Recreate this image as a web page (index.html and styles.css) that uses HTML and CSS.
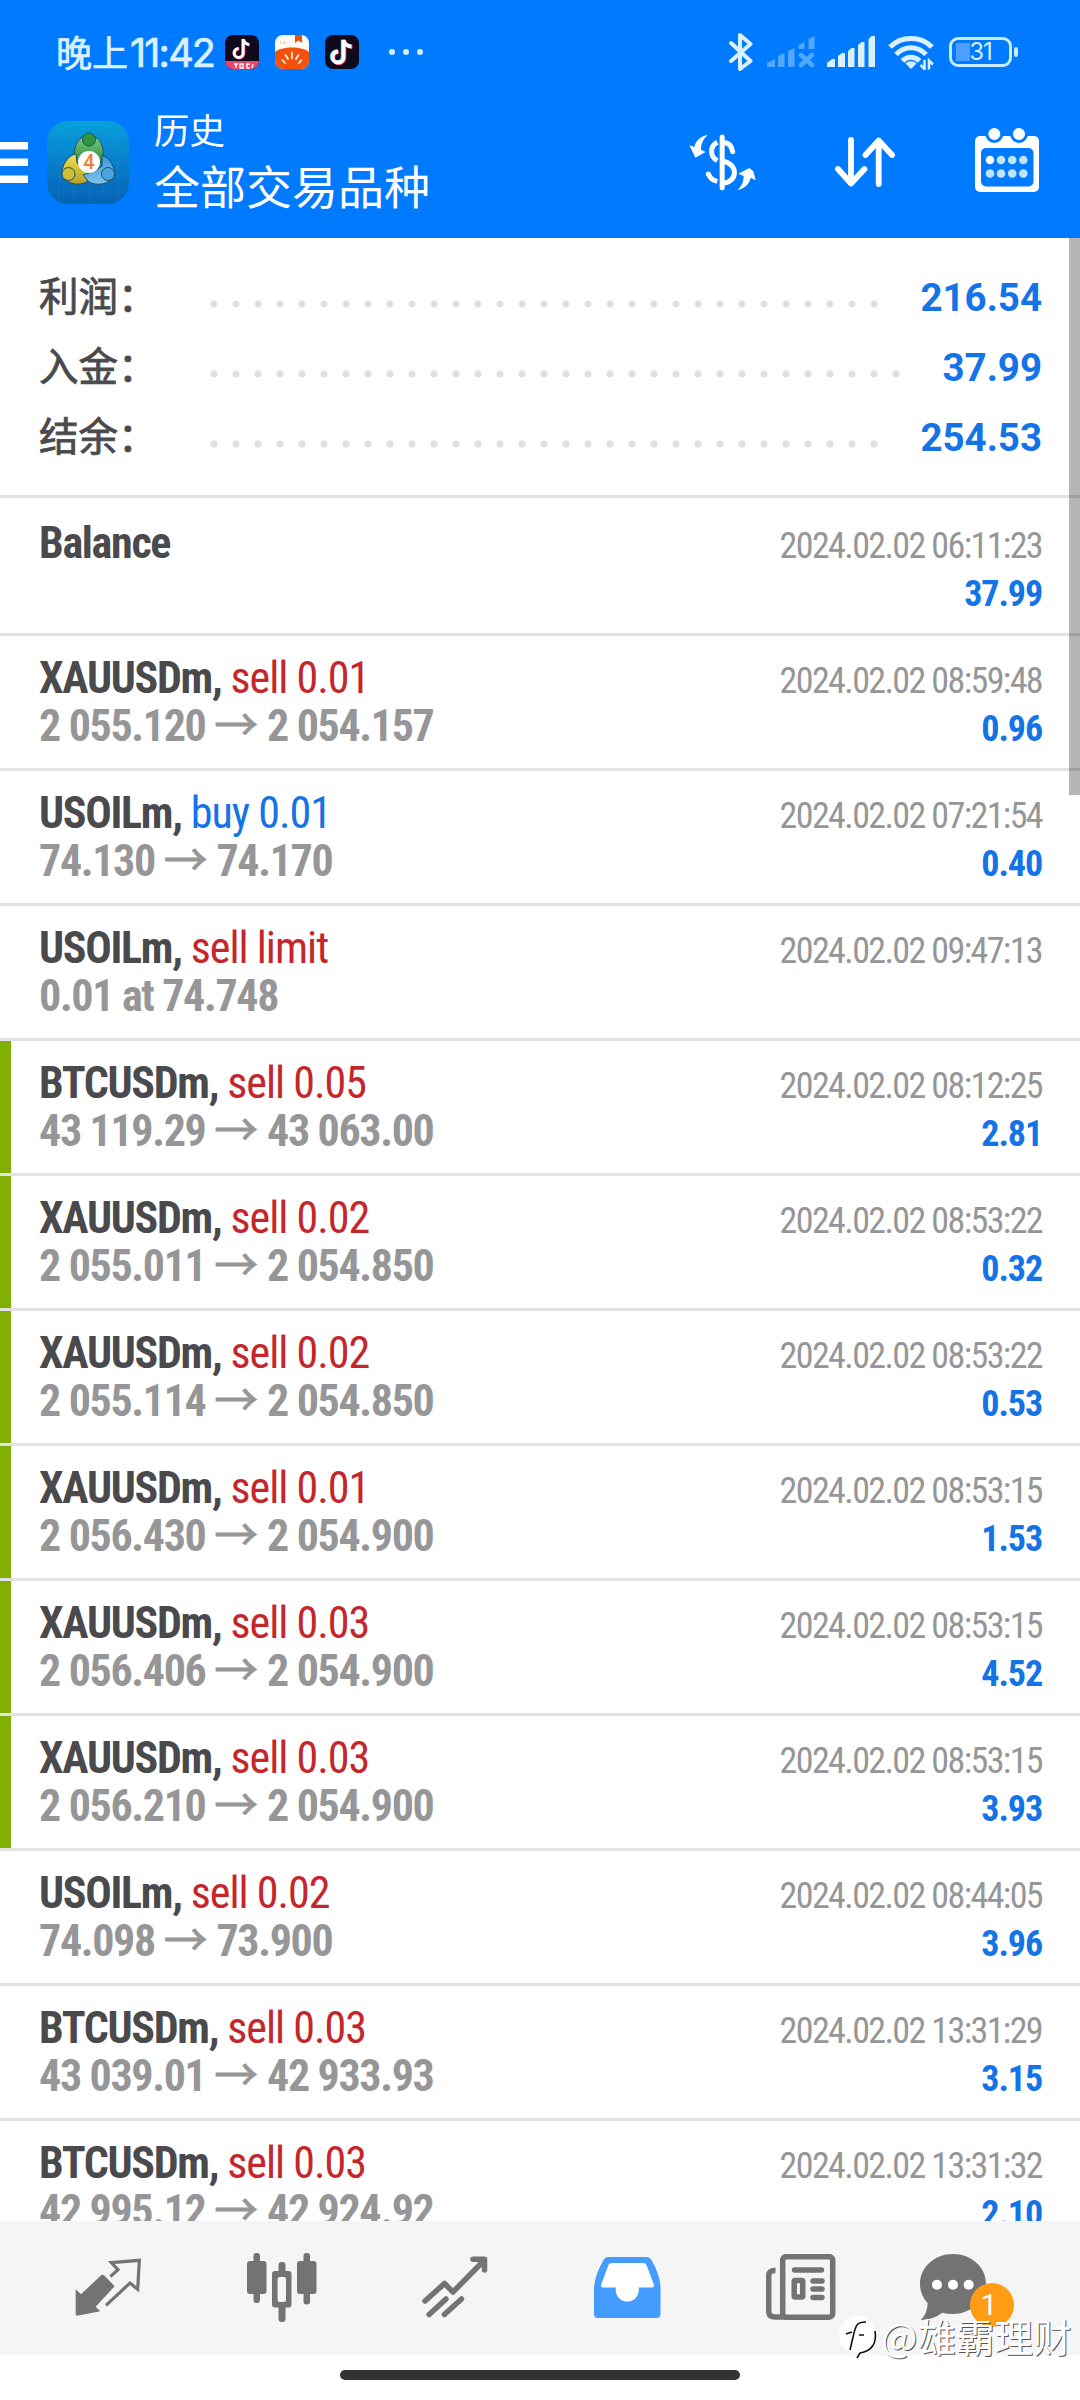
FILE: index.html
```html
<!DOCTYPE html>
<html lang="zh-CN">
<head>
<meta charset="utf-8">
<title>历史</title>
<link rel="stylesheet" href="styles.css">
</head>
<body>
<div class="screen">
  <header class="header">
    <div class="status">
      <div class="time">晚上<span class="clock">11:42</span></div>
      <div class="notif">
        <svg width="34" height="34" viewBox="0 0 34 34"><defs><clipPath id="r"><rect width="34" height="34" rx="8"/></clipPath></defs><g clip-path="url(#r)"><rect width="34" height="34" fill="#100b1c"/><rect y="26" width="34" height="8" fill="#e8476a"/></g><g fill="none" stroke-width="3"><path d="M18 4v14a4.500 4.500 0 1 1-4.500-4.500M18 4c1 4 3 5 6 5.500" stroke="#f8587c" transform="translate(.8 .6)"/><path d="M18 4v14a4.500 4.500 0 1 1-4.500-4.500M18 4c1 4 3 5 6 5.500" stroke="#fff"/></g><path d="M9 29h4m-2-1v5m4-4h3v4h-3zm6 0h4m-3 0v4h3m3-4l-1 4" stroke="#fff" stroke-width="1.300" fill="none"/></svg>
        <svg width="34" height="34" viewBox="0 0 34 34"><g clip-path="url(#r)"><rect width="34" height="34" fill="#fffaf3"/><path d="M20 0h7v8l-3.500-2.500L20 8z" fill="#f0500f"/><path d="M0 17C6 11 28 11 34 17V34H0z" fill="#f4500e"/></g><g stroke="#fff3dc" stroke-width="1.800" stroke-linecap="round"><path d="M17 18v5M10.500 20l2.500 4M23.500 20l-2.500 4M7.500 25l2.500 3M26.500 25l-2.500 3"/></g><path d="M5 6l2 3M10 6l-1 3" stroke="#f7b08c"/></svg>
        <svg width="34" height="34" viewBox="0 0 34 34"><rect width="34" height="34" rx="8" fill="#100b1c"/><g fill="none" stroke-width="3.800"><path d="M18.500 5v17a5.500 5.500 0 1 1-5.500-5.500M18.500 5c1 5 4 6 8 6.500" stroke="#2fe0e0" transform="translate(-.8 -.4)"/><path d="M18.500 5v17a5.500 5.500 0 1 1-5.500-5.500M18.500 5c1 5 4 6 8 6.500" stroke="#f8466e" transform="translate(.9 .7)"/><path d="M18.500 5v17a5.500 5.500 0 1 1-5.500-5.500M18.500 5c1 5 4 6 8 6.500" stroke="#fff"/></g></svg>
      </div>
      <svg class="more" width="34" height="8" viewBox="0 0 34 8" fill="#cfefff"><circle cx="3" cy="4" r="3"/><circle cx="17" cy="4" r="3"/><circle cx="31" cy="4" r="3"/></svg>
      <div class="signals">
        <svg width="24" height="38" viewBox="0 0 24 38" fill="none" stroke="#d8f0ff" stroke-width="4" stroke-linecap="round" stroke-linejoin="round"><path d="M2 10L21.500 28L11 36V2L21.500 11L2 28"/></svg>
        <svg class="sim1" width="48" height="32" viewBox="0 0 48 32" fill="#52a8ff"><path d="M0 31v-4l8-4v8zM11 31V20l6.500-3v14zM21 31V15l6.500-3v19zM31.500 13V9l6-3v7zM41.500 13V3l6-3v13z"/><path d="M34 19l11 10M45 19L34 29" stroke="#52a8ff" stroke-width="4.500" stroke-linecap="round"/></svg>
        <svg class="sim2" width="48" height="32" viewBox="0 0 48 32" fill="#d8f0ff"><path d="M0 31v-4l5-4h3v8zM11 31V20l4-3h3v14zM21 31V15l3.500-3h3v19zM31 31V9l3.500-3h3v25zM41.500 31V3l3-3h3.500v31z"/></svg>
        <svg class="wifi" width="46" height="35" viewBox="0 0 46 35" fill="none" stroke="#d8f0ff" stroke-width="5"><path d="M2 12C13 .5 33 .5 44 12M8 19.500c8.500-9 21.500-9 30 0M14.500 26c4.500-5 12.500-5 17 0"/><path d="M23 34l-5.500-5.500c3-3 8-3 11 0z" fill="#d8f0ff" stroke="none"/><path d="M36.500 25v9l-4-4M41 34.500v-9l4 4" stroke-width="2.500"/></svg>
        <div class="battery"><span>31</span></div>
      </div>
    </div>
    <div class="appbar">
      <svg class="menu" width="28" height="41" viewBox="0 0 28 41" fill="#fff"><path d="M0 0h28v7.500H0zM0 16.500h28V24H0zM0 33.500h28V41H0z"/></svg>
      <svg class="logo" width="82" height="83" viewBox="0 0 82 83">
        <defs><linearGradient id="bg" x2="0" y2="1"><stop offset="0" stop-color="#06a2da"/><stop offset=".5" stop-color="#087ecb"/><stop offset="1" stop-color="#0563b4"/></linearGradient>
        <linearGradient id="gr" x2="0" y2="1"><stop offset="0" stop-color="#83c98b"/><stop offset="1" stop-color="#228a32"/></linearGradient>
        <linearGradient id="ye" x2="0" y2="1"><stop offset="0" stop-color="#f0e054"/><stop offset="1" stop-color="#b3a226"/></linearGradient>
        <linearGradient id="bl" x2="0" y2="1"><stop offset="0" stop-color="#3d94d4"/><stop offset="1" stop-color="#7cc4ee"/></linearGradient></defs>
        <rect width="82" height="83" rx="21" fill="url(#bg)"/>
        <path d="M12 3v77M27 0v83M42 0v83M57 0v83M71 3v77M1 13h80M0 27h82M0 42h82M0 56h82M1 71h80" stroke="#3db4ec" stroke-opacity=".14"/>
        <g stroke="#1c5264" stroke-width="1"><path d="M27 37C26 24 33 14 42 14S58 24 56 37L52 44H31z" fill="url(#gr)"/><path d="M29 33C21 34 14 45 15 54C18 62 30 66 40 61L41 52L30 42z" fill="url(#ye)"/><path d="M55 34C63 37 69 47 67 55C62 64 50 65 42 61L36 54L48 50L55 45z" fill="url(#bl)"/><circle cx="42" cy="18.500" r="6.500" fill="#2f983d"/><circle cx="21.500" cy="53" r="6.500" fill="#d2be35"/><circle cx="61" cy="53" r="6.500" fill="#4ba6e0"/></g>
        <circle cx="42" cy="41" r="11" fill="#fff"/><text x="42" y="48" text-anchor="middle" class="logo-num">4</text>
      </svg>
      <div class="titles"><div class="t1">历史</div><div class="t2">全部交易品种</div></div>
      <div class="actions">
        <svg width="67" height="57" viewBox="26 37 201 171" fill="none" stroke="#fff" stroke-width="15"><path d="M125.500 46V198M125 63C145 61 154 74 157 90" stroke-linecap="round"/><path d="M111 62C88 74 88 104 111 117M126 119C174 124 174 181 128 185M84 156C88 168 97 176 111 179"/><circle cx="84" cy="157" r="7.500" fill="#fff" stroke="none"/><path d="M83 39C68 52 62 66 62 84L76 91L45 108L27 71L42 76C46 56 62 43 83 39zM171 206C184 193 190 180 190 163L174 156L207 139L219 149L226 176L211 168C208 187 192 200 171 206z" fill="#fff" stroke="none"/></svg>
        <svg class="sort" width="60" height="50" viewBox="0 0 60 50" fill="none" stroke="#fff" stroke-width="5.800" stroke-linecap="round" stroke-linejoin="round"><path d="M16 3v43M3 32l13 14.500L29.500 32M43.700 47V4M30.500 18L43.700 3.500L57 18"/></svg>
        <svg class="cal" width="64" height="64" viewBox="0 0 64 64"><rect y="8" width="64" height="56" rx="5" fill="#fff"/><rect x="6" y="20" width="52.500" height="38.500" rx="5" fill="#007aff"/><g fill="#fff" stroke="#007aff" stroke-width="3"><circle cx="19.300" cy="6" r="7.500"/><circle cx="44" cy="6" r="7.500"/></g><circle cx="15" cy="32" r="4.300" fill="#fff"/><g fill="#c0e3ff"><circle cx="26" cy="32" r="4.300"/><circle cx="37.200" cy="32" r="4.300"/><circle cx="48.300" cy="32" r="4.300"/><circle cx="15" cy="45.500" r="4.300"/><circle cx="26" cy="45.500" r="4.300"/><circle cx="37.200" cy="45.500" r="4.300"/><circle cx="48.300" cy="45.500" r="4.300"/></g></svg>
      </div>
    </div>
  </header>

  <main class="list">
    <section class="summary">
      <div class="sum"><span class="label">利润：</span><i class="dots"></i><b>216.54</b></div>
      <div class="sum"><span class="label">入金：</span><i class="dots"></i><b>37.99</b></div>
      <div class="sum"><span class="label">结余：</span><i class="dots"></i><b>254.53</b></div>
    </section>
    <div class="row first"><div class="deal"><p><b>Balance</b></p></div><div class="side"><p>2024.02.02 06:11:23</p><p class="profit">37.99</p></div></div>
    <div class="row"><div class="deal"><p><b>XAUUSDm,</b> <span class="sell">sell 0.01</span></p><p class="price">2 055.120 <i>→</i> 2 054.157</p></div><div class="side"><p>2024.02.02 08:59:48</p><p class="profit">0.96</p></div></div>
    <div class="row"><div class="deal"><p><b>USOILm,</b> <span class="buy">buy 0.01</span></p><p class="price">74.130 <i>→</i> 74.170</p></div><div class="side"><p>2024.02.02 07:21:54</p><p class="profit">0.40</p></div></div>
    <div class="row"><div class="deal"><p><b>USOILm,</b> <span class="sell">sell limit</span></p><p class="price">0.01 at 74.748</p></div><div class="side"><p>2024.02.02 09:47:13</p></div></div>
    <div class="row tp"><div class="deal"><p><b>BTCUSDm,</b> <span class="sell">sell 0.05</span></p><p class="price">43 119.29 <i>→</i> 43 063.00</p></div><div class="side"><p>2024.02.02 08:12:25</p><p class="profit">2.81</p></div></div>
    <div class="row tp"><div class="deal"><p><b>XAUUSDm,</b> <span class="sell">sell 0.02</span></p><p class="price">2 055.011 <i>→</i> 2 054.850</p></div><div class="side"><p>2024.02.02 08:53:22</p><p class="profit">0.32</p></div></div>
    <div class="row tp"><div class="deal"><p><b>XAUUSDm,</b> <span class="sell">sell 0.02</span></p><p class="price">2 055.114 <i>→</i> 2 054.850</p></div><div class="side"><p>2024.02.02 08:53:22</p><p class="profit">0.53</p></div></div>
    <div class="row tp"><div class="deal"><p><b>XAUUSDm,</b> <span class="sell">sell 0.01</span></p><p class="price">2 056.430 <i>→</i> 2 054.900</p></div><div class="side"><p>2024.02.02 08:53:15</p><p class="profit">1.53</p></div></div>
    <div class="row tp"><div class="deal"><p><b>XAUUSDm,</b> <span class="sell">sell 0.03</span></p><p class="price">2 056.406 <i>→</i> 2 054.900</p></div><div class="side"><p>2024.02.02 08:53:15</p><p class="profit">4.52</p></div></div>
    <div class="row tp"><div class="deal"><p><b>XAUUSDm,</b> <span class="sell">sell 0.03</span></p><p class="price">2 056.210 <i>→</i> 2 054.900</p></div><div class="side"><p>2024.02.02 08:53:15</p><p class="profit">3.93</p></div></div>
    <div class="row"><div class="deal"><p><b>USOILm,</b> <span class="sell">sell 0.02</span></p><p class="price">74.098 <i>→</i> 73.900</p></div><div class="side"><p>2024.02.02 08:44:05</p><p class="profit">3.96</p></div></div>
    <div class="row"><div class="deal"><p><b>BTCUSDm,</b> <span class="sell">sell 0.03</span></p><p class="price">43 039.01 <i>→</i> 42 933.93</p></div><div class="side"><p>2024.02.02 13:31:29</p><p class="profit">3.15</p></div></div>
    <div class="row"><div class="deal"><p><b>BTCUSDm,</b> <span class="sell">sell 0.03</span></p><p class="price">42 995.12 <i>→</i> 42 924.92</p></div><div class="side"><p>2024.02.02 13:31:32</p><p class="profit">2.10</p></div></div>
    <div class="scrollbar"></div>
  </main>

  <nav class="nav">
    <div><svg width="67" height="58" viewBox="46 28 201 174"><path d="M48 122L64 137L125 79Q130 77 133 80L165 113L108 174L122 188L52 201Q48 201 48 197z" fill="#737373"/><path d="M152 84L175 63L155 42L239 35L234 122L211 103L139 170" fill="none" stroke="#737373" stroke-width="9.500"/></svg></div>
    <div><svg width="70" height="69" viewBox="0 0 70 69" fill="#737373"><rect y="8" width="19.500" height="33" rx="3"/><rect x="6.500" width="6.500" height="50" rx="3"/><rect x="50" y="8" width="19.500" height="33" rx="3"/><rect x="56.500" width="6.500" height="51.500" rx="3"/><rect x="31.500" y="9" width="7" height="60" rx="3"/><rect x="25" y="18" width="19.500" height="36.500" rx="3"/><rect x="30.600" y="24" width="8.400" height="25" rx="2" fill="#f5f5f5"/></svg></div>
    <div><svg width="66" height="62" viewBox="0 0 66 62" fill="none" stroke="#737373" stroke-width="5.500" stroke-linecap="round" stroke-linejoin="round"><path d="M3 45L22.500 27.500L31 36L62 4.500M51 3.300H62.500V14M7.200 58.500L24 43M22.400 58.500L39.500 43"/></svg></div>
    <div><svg width="67" height="61" viewBox="0 0 67 61"><path fill="#fff" d="M16 5H50L61 30L46 45H21L6 30z"/><path fill-rule="evenodd" fill="#449cff" d="M14 0H52Q56 0 58 4Q66 18 66.500 30V57Q66.500 61 62.500 61H4Q0 61 0 57V30Q1 18 9 4Q11 0 14 0zM18 6Q15 6 14 9L7 28Q7 30.500 9 30.500H21.700V33A11.500 11.500 0 0 0 44.800 33V30.500H58Q60 30.500 60 28L53 9Q52 6 49 6z"/></svg></div>
    <div><svg width="70" height="66" viewBox="0 0 70 66" fill="none" stroke="#737373" stroke-width="5.500"><rect x="16.700" y="2.700" width="50" height="60.500" rx="3.500"/><path d="M9.500 16.500Q2.700 16 2.700 22V57Q2.700 63 9 63H20"/><path d="M28.500 16H55.500M47 27H56M47 35H56M47 43.500H56" stroke-linecap="round"/><rect x="28.200" y="26.500" width="8.500" height="16.500" rx="1"/></svg></div>
    <div class="chat"><svg width="66" height="66" viewBox="300 42 198 198"><path d="M399 42C454 42 498 82 498 131S454 222 399 222Q382 222 367 218Q342 238 302 240Q322 222 323 190Q300 165 300 131C300 82 344 42 399 42z" fill="#737373"/><g fill="#fff"><circle cx="351" cy="134" r="15"/><circle cx="399" cy="134" r="15"/><circle cx="446" cy="134" r="15"/></g></svg><span class="badge">1</span></div>
  </nav>
  <div class="gesture"><div></div></div>
  <div class="mark"><svg width="40" height="44" viewBox="0 0 40 44"><path d="M19 1C30 1 38 9 38 20C38 32 31 36 20 42V38C9 38 1 31 1 20S9 1 19 1z" fill="#fff"/><path d="M28 7C19 7 18 10 16 18L12 35M8 19L14 17M21 20H26M37 16C39 28 34 36 22 38L19 43" fill="none" stroke="#111" stroke-width="1.600"/></svg><span>@雄霸理财</span></div>
</div>
</body>
</html>
```
FILE: styles.css
```css
* { box-sizing: border-box; }
body { margin: 0; background: #fff; font-family: Roboto, "Noto Sans CJK SC", sans-serif; }
p { margin: 0; }
svg { display: block; flex: none; }
.screen { position: relative; width: 1080px; height: 2400px; display: flex; flex-direction: column; overflow: hidden; background: #fff; }

.header { height: 238px; background: #007aff; color: #fff; }
.status { height: 100px; padding: 4px 62px 0 56px; display: flex; align-items: center; }
.time { width: 169px; margin-top: -3px; font: 400 36px/60px "Noto Sans CJK SC", sans-serif; color: #d8f0ff; -webkit-text-stroke: .7px #d8f0ff; white-space: nowrap; }
.clock { font-family: Inter, sans-serif; font-size: 39.500px; letter-spacing: -1.800px; margin-left: 2px; line-height: 0; }
.notif { display: flex; gap: 16px; }
.more { margin-left: 30px; }
.signals { margin-left: auto; display: flex; align-items: center; }
.sim1 { margin-left: 14px; }
.sim2 { margin-left: 12px; }
.wifi { margin-left: 13px; }
.battery { position: relative; margin-left: 15px; width: 63px; height: 30px; border: 3px solid #c8ebff; border-radius: 9px; background: linear-gradient(#4d9eff, #4d9eff) 4px 3px / 14px 18px no-repeat; font: 400 24px/24px Inter, sans-serif; text-align: center; color: #d8f0ff; margin-right: 6px; letter-spacing: -1px; }
.battery::after { content: ""; position: absolute; right: -9px; top: 7px; width: 4px; height: 10px; border-radius: 2px; background: #c8ebff; }

.appbar { height: 124px; padding-right: 41px; display: flex; align-items: center; }
.logo { margin-left: 19px; }
.logo-num { font: 500 20px Roboto, sans-serif; fill: #f08030; }
.titles { margin-left: 25px; padding-bottom: 10px; font-family: "Noto Sans CJK SC", sans-serif; font-weight: 400; }
.t1 { font-size: 35.500px; line-height: 53px; }
.t2 { font-size: 46px; line-height: 58px; }
.actions { margin-left: auto; display: flex; align-items: center; }
.sort { margin-left: 79px; }
.cal { margin: -4px 0 0 80px; }

.list { position: relative; flex: 1; min-height: 0; overflow: hidden; }
.summary { height: 260px; padding: 25px 38px 0 39px; border-bottom: 3px solid #e3e3e3; }
.sum { height: 70px; display: flex; align-items: baseline; }
.sum b { font-size: 38.500px; line-height: 70px; color: #1473e6; }
.label { width: 164px; font: 400 39.500px/40px "Noto Sans CJK SC", sans-serif; color: #4a4a4d; -webkit-text-stroke: .8px #4a4a4d; white-space: nowrap; }
.dots { flex: 1; align-self: center; height: 8px; margin: 11px 33px 0 0; background: radial-gradient(circle at 11px 4px, #e0e0e0 3.200px, transparent 4px) 0 0 / 22px 8px repeat-x; }

.row { height: 135px; padding: 18px 38px 0 39px; border-bottom: 3px solid #e3e3e3; display: flex; justify-content: space-between; font-stretch: 75%; }
.first { height: 138px; padding-top: 21px; }
.tp { background: linear-gradient(#80b003, #80b003) 0 0 / 11px 100% no-repeat; background-clip: padding-box; }
.row p { height: 48px; line-height: 48px; white-space: nowrap; }
.deal { font-size: 44px; letter-spacing: -1px; color: #4a4a4d; }
.deal b { letter-spacing: -1.300px; }
.sell { color: #c4262c; }
.buy { color: #1473e6; }
.price { font-weight: 700; letter-spacing: -1.350px; color: #969698; }
.price i { font: 400 44px/0 "Noto Sans CJK SC", sans-serif; letter-spacing: 0; -webkit-text-stroke: .8px #969698; }
.side { padding-top: 3px; text-align: right; font-size: 36px; letter-spacing: -1.600px; color: #969698; }
.side .profit { font-weight: 700; letter-spacing: -1.100px; color: #1473e6; }
.scrollbar { position: absolute; right: 0; top: 0; width: 11px; height: 557px; background: rgba(0, 0, 0, .29); }

.nav { height: 134px; padding: 0 20px 2px 22px; display: grid; grid-template-columns: repeat(6, 1fr); align-items: center; justify-items: center; background: #f5f5f5; }
.chat { position: relative; margin-right: 42px; }
.badge { position: absolute; left: 50px; top: 29px; width: 44px; height: 44px; border-radius: 50%; background: #ff9c14; color: #fff; font: 400 30px/44px Roboto, sans-serif; text-align: center; padding-right: 5px; }
.gesture { height: 45px; padding-top: 15px; }
.gesture div { width: 400px; height: 10px; margin: 0 auto; border-radius: 5px; background: #323232; }
.mark { position: absolute; left: 838px; top: 2315px; display: flex; align-items: center; gap: 3px; color: #fff; font: 400 38.500px/46px "Noto Sans CJK SC", sans-serif; white-space: nowrap; text-shadow: 1px 1px 0 #555; }
.mark span { margin-top: -5px; }
```
